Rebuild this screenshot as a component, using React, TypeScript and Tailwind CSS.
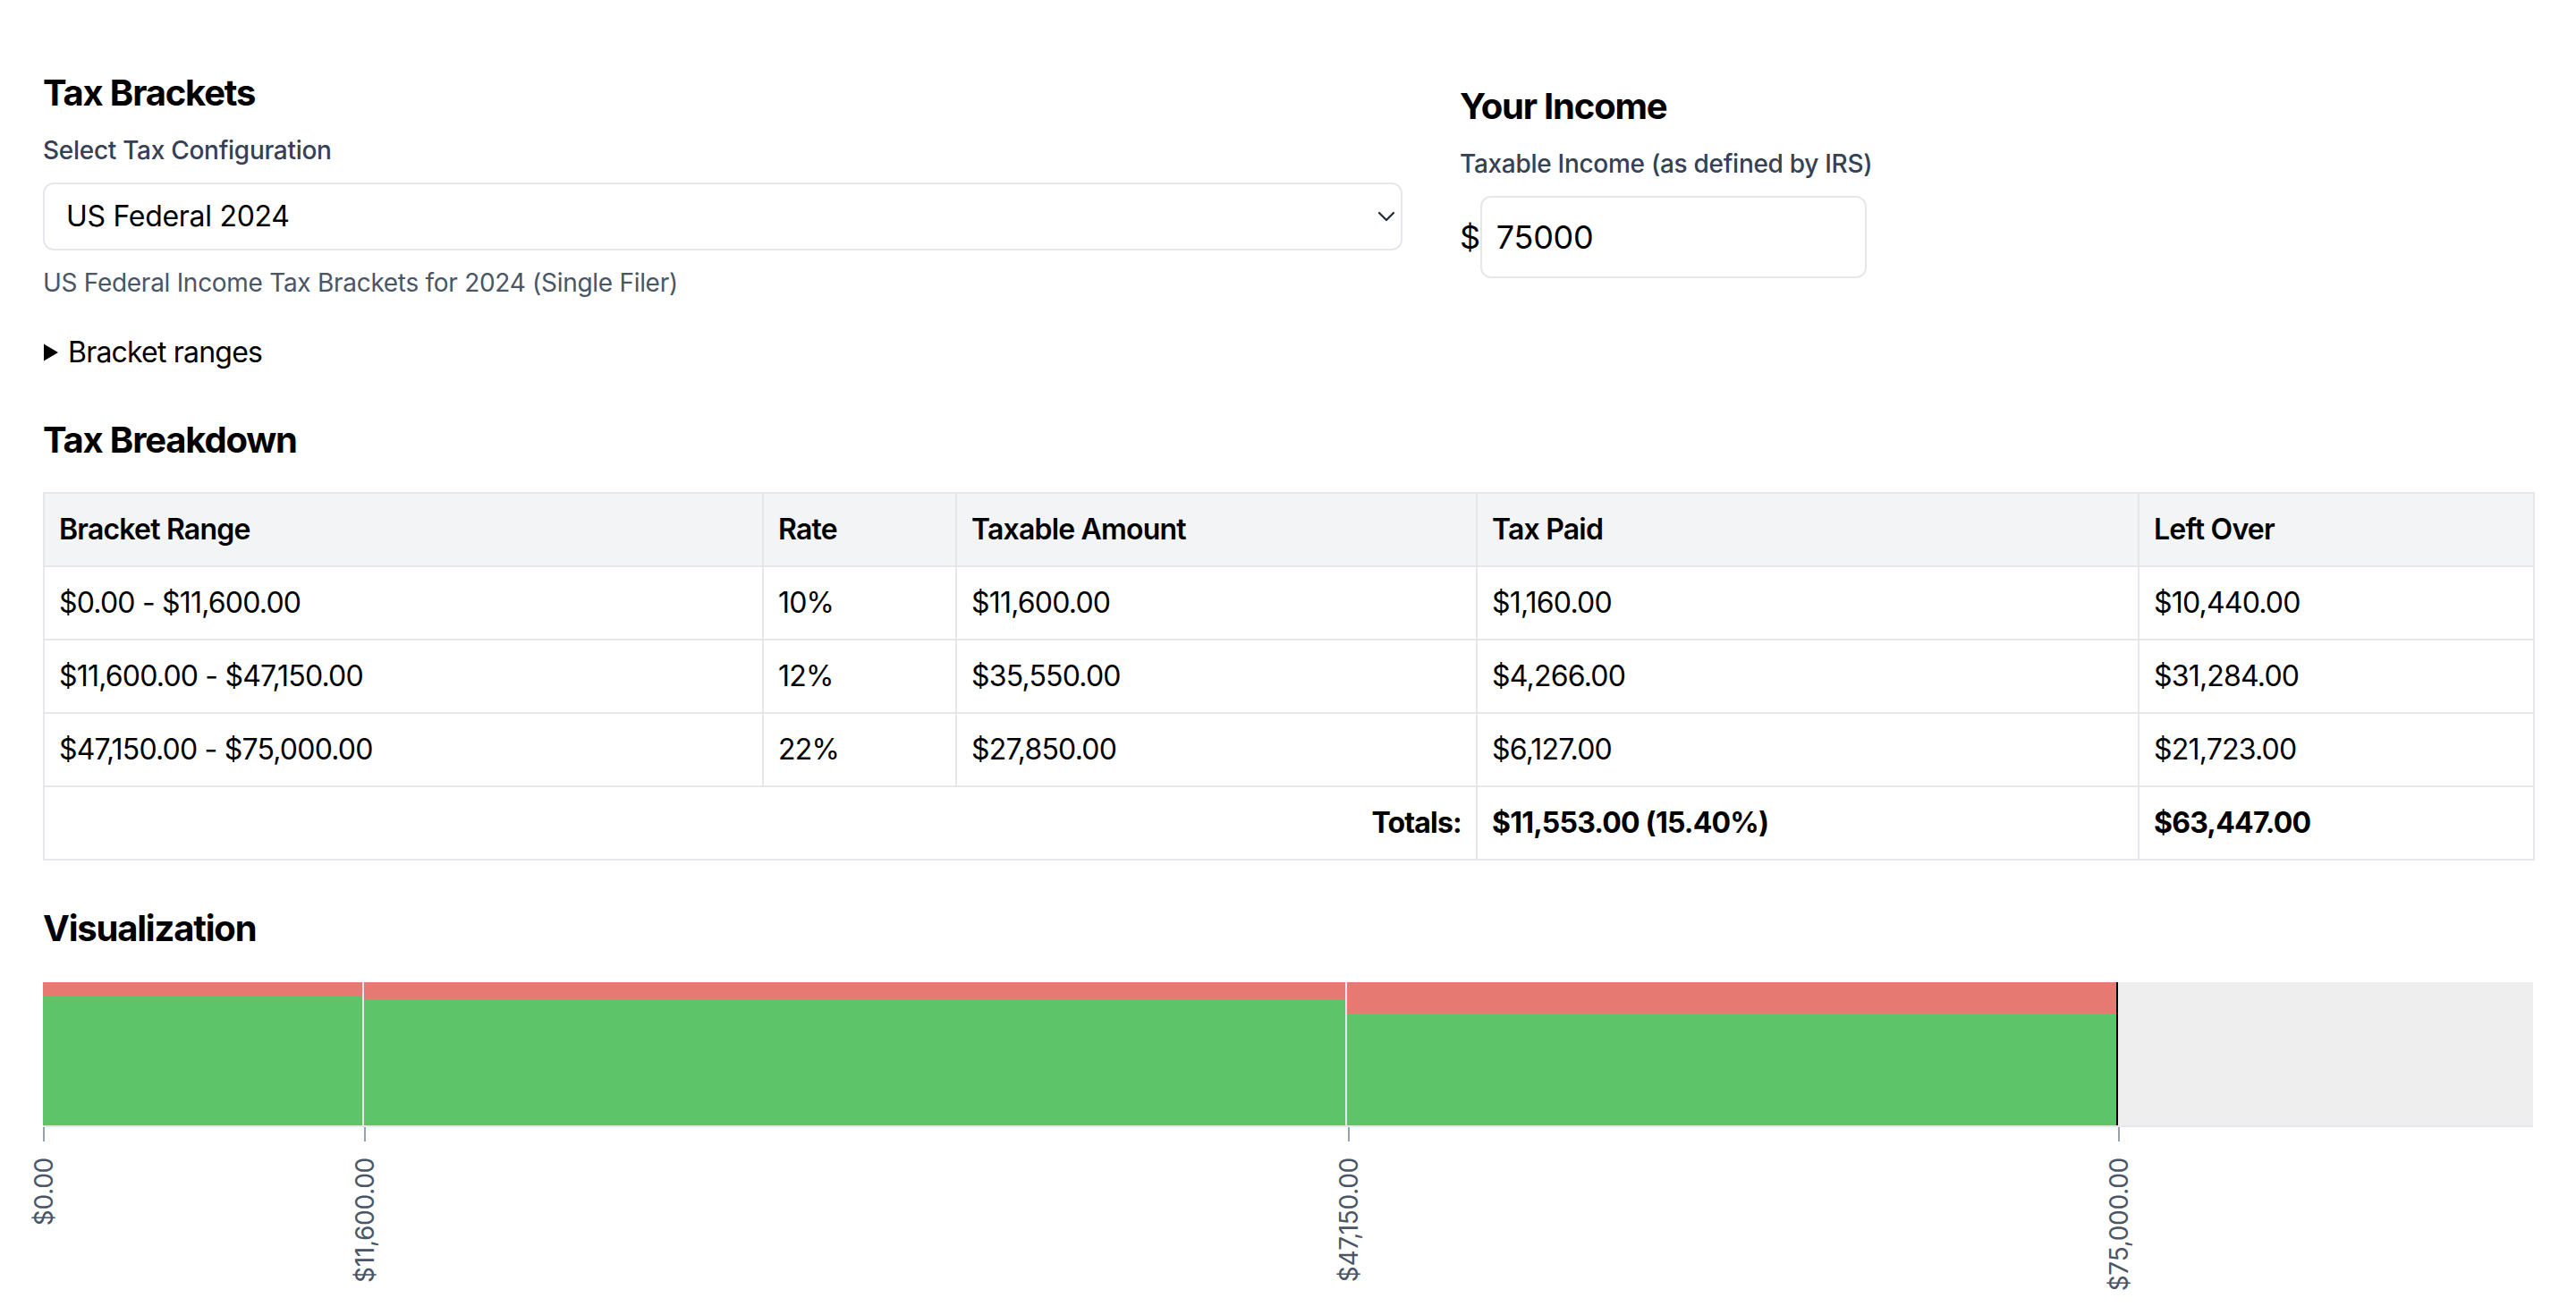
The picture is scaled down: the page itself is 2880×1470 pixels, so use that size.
import { useState } from "react";
import clsx from "clsx";

type Bracket = { min: number; max: number | null; rate: number };

const configs: Record<string, { label: string; description: string; brackets: Bracket[] }> = {
  us2024: {
    label: "US Federal 2024",
    description: "US Federal Income Tax Brackets for 2024 (Single Filer)",
    brackets: [
      { min: 0, max: 11600, rate: 0.1 },
      { min: 11600, max: 47150, rate: 0.12 },
      { min: 47150, max: 100525, rate: 0.22 },
      { min: 100525, max: 191950, rate: 0.24 },
      { min: 191950, max: 243725, rate: 0.32 },
      { min: 243725, max: 609350, rate: 0.35 },
      { min: 609350, max: null, rate: 0.37 },
    ],
  },
  us2023: {
    label: "US Federal 2023",
    description: "US Federal Income Tax Brackets for 2023 (Single Filer)",
    brackets: [
      { min: 0, max: 11000, rate: 0.1 },
      { min: 11000, max: 44725, rate: 0.12 },
      { min: 44725, max: 95375, rate: 0.22 },
      { min: 95375, max: 182100, rate: 0.24 },
      { min: 182100, max: 231250, rate: 0.32 },
      { min: 231250, max: 578125, rate: 0.35 },
      { min: 578125, max: null, rate: 0.37 },
    ],
  },
};

const usd = (n: number) =>
  n.toLocaleString("en-US", { style: "currency", currency: "USD", minimumFractionDigits: 2 });

const heading = "text-[40px] leading-[56px] font-bold tracking-[-0.03em]";
const cell = "border-2 border-gray-200 px-4 py-4";

export default function App() {
  const [configKey, setConfigKey] = useState("us2024");
  const [incomeText, setIncomeText] = useState("75000");
  const config = configs[configKey];
  const income = Math.max(0, Number(incomeText) || 0);

  // rows of the breakdown, only brackets that the income reaches
  const rows = config.brackets
    .filter((b) => income > b.min)
    .map((b) => {
      const top = b.max === null ? income : Math.min(b.max, income);
      const taxable = top - b.min;
      const tax = taxable * b.rate;
      return { ...b, top, taxable, tax, left: taxable - tax };
    });

  const totalTax = rows.reduce((s, r) => s + r.tax, 0);
  const totalLeft = rows.reduce((s, r) => s + r.left, 0);
  const effective = income > 0 ? (totalTax / income) * 100 : 0;

  const chartMax = income * 1.2 || 1;
  const ticks = [...rows.map((r) => r.min), ...(rows.length ? [income] : [])];

  return (
    <div className="min-h-screen bg-white px-12 pt-[76px] pb-8 font-[Inter,'Noto_Sans',sans-serif] tracking-[-0.018em] text-black">
      <div className="flex gap-16">
        {/* Tax Brackets */}
        <section className="w-[1520px]">
          <h2 className={heading}>Tax Brackets</h2>
          <label htmlFor="config" className="mt-4 block text-[28px] leading-[40px] font-medium text-gray-700">
            Select Tax Configuration
          </label>
          <div className="relative mt-4">
            <select
              id="config"
              value={configKey}
              onChange={(e) => setConfigKey(e.target.value)}
              className="h-[76px] w-full appearance-none rounded-xl border-2 border-gray-200 bg-white px-6 text-[32px] text-black focus:outline-none"
            >
              {Object.entries(configs).map(([key, c]) => (
                <option key={key} value={key}>
                  {c.label}
                </option>
              ))}
            </select>
            <svg
              className="pointer-events-none absolute top-1/2 right-[8px] -translate-y-1/2"
              width="20"
              height="12"
              viewBox="0 0 20 12"
              fill="none"
            >
              <path d="M2 2l8 8 8-8" stroke="#1f2937" strokeWidth="2.2" strokeLinecap="round" strokeLinejoin="round" />
            </svg>
          </div>
          <p className="mt-4 text-[28px] leading-[40px] text-gray-600">{config.description}</p>
          <details className="group mt-[34px] text-[32px] leading-[48px] tracking-[-0.025em]">
            <summary className="flex cursor-pointer list-none items-center gap-[10px] [&::-webkit-details-marker]:hidden">
              <svg width="18" height="20" viewBox="0 0 18 20" className="group-open:rotate-90">
                <path d="M1 0.5L17 10L1 19.5Z" fill="#000" />
              </svg>
              Bracket ranges
            </summary>
            <ul className="mt-4 pl-10 text-[28px] text-gray-700">
              {config.brackets.map((b) => (
                <li key={b.min}>
                  {usd(b.min)} - {b.max === null ? "and up" : usd(b.max)}: {Math.round(b.rate * 100)}%
                </li>
              ))}
            </ul>
          </details>
        </section>

        {/* Your Income */}
        <section className="flex-1 pt-[15px]">
          <h2 className={heading}>Your Income</h2>
          <label htmlFor="income" className="mt-4 block text-[28px] leading-[40px] font-medium text-gray-700">
            Taxable Income (as defined by IRS)
          </label>
          <div className="mt-4 flex items-center">
            <span className="text-[36px] leading-[56px]">$</span>
            <input
              id="income"
              type="text"
              inputMode="numeric"
              value={incomeText}
              onChange={(e) => setIncomeText(e.target.value)}
              className="h-[92px] w-[432px] rounded-xl border-2 border-gray-200 px-4 text-[36px] focus:outline-none"
            />
          </div>
        </section>
      </div>

      {/* Tax Breakdown */}
      <h2 className={clsx(heading, "mt-[46px]")}>Tax Breakdown</h2>
      <table className="mt-[30px] w-full table-fixed border-collapse text-[32px] leading-[48px] tracking-[-0.025em]">
        <colgroup>
          <col className="w-[804px]" />
          <col className="w-[216px]" />
          <col className="w-[582px]" />
          <col className="w-[740px]" />
          <col className="w-[442px]" />
        </colgroup>
        <thead>
          <tr className="bg-gray-100 text-left">
            <th className={clsx(cell, "font-semibold")}>Bracket Range</th>
            <th className={clsx(cell, "font-semibold")}>Rate</th>
            <th className={clsx(cell, "font-semibold")}>Taxable Amount</th>
            <th className={clsx(cell, "font-semibold")}>Tax Paid</th>
            <th className={clsx(cell, "font-semibold")}>Left Over</th>
          </tr>
        </thead>
        <tbody>
          {rows.map((r) => (
            <tr key={r.min}>
              <td className={cell}>
                {usd(r.min)} - {usd(r.top)}
              </td>
              <td className={cell}>{Math.round(r.rate * 100)}%</td>
              <td className={cell}>{usd(r.taxable)}</td>
              <td className={cell}>{usd(r.tax)}</td>
              <td className={cell}>{usd(r.left)}</td>
            </tr>
          ))}
          <tr className="font-bold">
            <td colSpan={3} className={clsx(cell, "text-right")}>
              Totals:
            </td>
            <td className={cell}>
              {usd(totalTax)} ({effective.toFixed(2)}%)
            </td>
            <td className={cell}>{usd(totalLeft)}</td>
          </tr>
        </tbody>
      </table>

      {/* Visualization */}
      <h2 className={clsx(heading, "mt-12")}>Visualization</h2>
      <div className="mt-8">
        <div className="flex h-[162px] border-b-2 border-gray-200 bg-[#eeeeee]">
          {rows.map((r, i) => (
            <div
              key={r.min}
              className={clsx(
                "flex h-full flex-col border-r-2",
                i === rows.length - 1 ? "border-black" : "border-[#e5e7eb]"
              )}
              style={{ width: `${(r.taxable / chartMax) * 100}%` }}
            >
              <div className="bg-[#e77973]" style={{ height: `${r.rate * 100}%` }} />
              <div className="flex-1 bg-[#5ec46a]" />
            </div>
          ))}
        </div>
        <div className="relative h-[184px]">
          {ticks.map((t) => (
            <div key={t} className="absolute top-0 h-full" style={{ left: `${(t / chartMax) * 100}%` }}>
              <div className="h-4 w-[2px] bg-gray-400" />
              <div className="absolute top-[34px] left-[1px] -translate-x-1/2 rotate-180 text-[28px] leading-[36px] tracking-[-0.01em] whitespace-nowrap text-gray-600 [writing-mode:vertical-rl]">
                {usd(t)}
              </div>
            </div>
          ))}
        </div>
      </div>
    </div>
  );
}
